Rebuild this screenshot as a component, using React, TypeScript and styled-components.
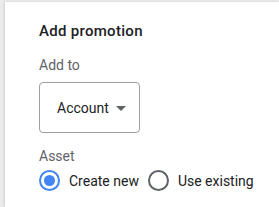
import React from "react";
import styled, { createGlobalStyle } from "styled-components";

const Global = createGlobalStyle`
  html, body { margin: 0; padding: 0; background: #ececec; }
  body { font-family: Roboto, "Liberation Sans", Arial, sans-serif; }
`;

const Page = styled.div`
  width: 279px;
  height: 207px;
  padding: 2px 0 0 5px;
  box-sizing: border-box;
  overflow: hidden;
`;

const Card = styled.div`
  background: #fff;
  height: 100%;
  box-shadow: -1px 0 3px rgba(0,0,0,0.12);
  padding: 19px 0 0 34px;
  box-sizing: border-box;
  display: flex;
  flex-direction: column;
`;

const Title = styled.div`
  font-size: 15px;
  font-weight: 500;
  letter-spacing: 0.3px;
  color: #202124;
  line-height: 20px;
`;

const Label = styled.div<{ $top: number }>`
  margin-top: ${(p) => p.$top}px;
  font-size: 14px;
  color: #5f6368;
  line-height: 20px;
`;

const Select = styled.div`
  margin-top: 7px;
  width: 101px;
  height: 51px;
  box-sizing: border-box;
  border: 1px solid #9aa0a6;
  border-radius: 4px;
  display: flex;
  align-items: center;
  padding-left: 17px;
  gap: 7px;
  font-size: 14px;
  color: #202124;
`;

const Arrow = styled.span`
  width: 0;
  height: 0;
  margin-top: 1px;
  border-left: 5px solid transparent;
  border-right: 5px solid transparent;
  border-top: 5px solid #5f6368;
`;

const RadioRow = styled.div`
  margin-top: 4px;
  display: flex;
  align-items: center;
  font-size: 14px;
  color: #202124;
`;

const Radio = styled.span<{ $checked?: boolean }>`
  width: 21px;
  height: 21px;
  box-sizing: border-box;
  border-radius: 50%;
  border: 2px solid ${(p) => (p.$checked ? "#4285f4" : "#5f6368")};
  display: flex;
  align-items: center;
  justify-content: center;
  margin-right: 9px;
  &::after {
    content: "";
    width: 11px;
    height: 11px;
    border-radius: 50%;
    background: ${(p) => (p.$checked ? "#4285f4" : "transparent")};
  }
`;

const Option = styled.label`
  display: flex;
  align-items: center;
  margin-right: 9px;
`;

export default function App() {
  return (
    <>
      <Global />
      <Page>
        <Card>
          <Title>Add promotion</Title>
          <Label $top={14}>Add to</Label>
          <Select>
            Account <Arrow />
          </Select>
          <Label $top={13}>Asset</Label>
          <RadioRow>
            <Option>
              <Radio $checked />
              Create new
            </Option>
            <Option>
              <Radio />
              Use existing
            </Option>
          </RadioRow>
        </Card>
      </Page>
    </>
  );
}
